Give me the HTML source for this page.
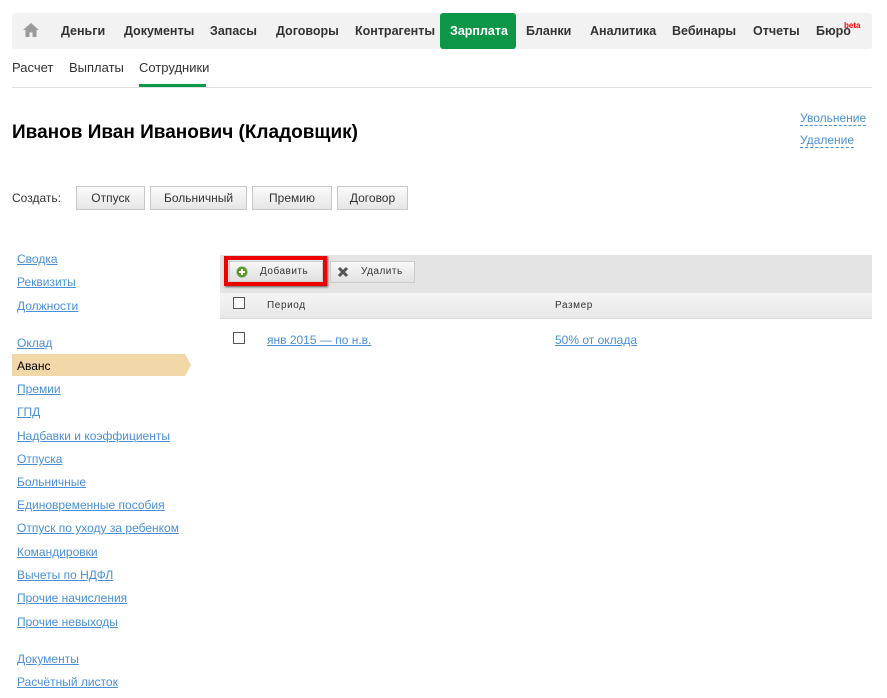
<!DOCTYPE html>
<html><head><meta charset="utf-8"><style>
*{margin:0;padding:0;box-sizing:border-box}
body{width:887px;height:698px;background:#fff;font-family:"Liberation Sans",Arial,sans-serif;position:relative;overflow:hidden;color:#333}
.a{position:absolute}
.nav{left:12px;top:13px;width:860px;height:36px;background:#f2f2f2;border-radius:3px}
.nav span{position:absolute;top:11px;font-size:12.5px;font-weight:bold;color:#333;white-space:nowrap}
.sub{top:60px;font-size:13px;color:#333}
.menu a{position:absolute;left:17px;font-size:12px;color:#4a90d9;text-decoration:underline;white-space:nowrap}
.btn{top:186px;height:24px;border:1px solid #c8c8c8;background:linear-gradient(#fafafa,#e6e6e6);font-size:12px;color:#333;text-align:center;line-height:22px}
.dash{font-size:12px;color:#4a90d9;border-bottom:1px dashed #4a90d9;left:800px}
</style></head><body>
<div class="a nav">
<svg class="a" style="left:10px;top:9px" width="18" height="16" viewBox="0 0 18 16"><path d="M9 1 L1 8 H3.5 V15 H7.5 V10.5 H10.5 V15 H14.5 V8 H17 Z" fill="#9a9a9a"/></svg>
<span style="left:49px">Деньги</span>
<span style="left:112px">Документы</span>
<span style="left:198px">Запасы</span>
<span style="left:264px">Договоры</span>
<span style="left:343px">Контрагенты</span>
<div class="a" style="left:428px;top:0;width:76px;height:36px;background:#0c9748;border-radius:3px"></div>
<span style="left:438px;color:#fff">Зарплата</span>
<span style="left:514px">Бланки</span>
<span style="left:578px">Аналитика</span>
<span style="left:660px">Вебинары</span>
<span style="left:741px">Отчеты</span>
<span style="left:804px">Бюро</span>
<span style="left:832px;top:8px;font-size:8px;color:#f00">beta</span>
</div>
<div class="a sub" style="left:12px">Расчет</div>
<div class="a sub" style="left:69px">Выплаты</div>
<div class="a sub" style="left:139px">Сотрудники</div>
<div class="a" style="left:139px;top:84px;width:67px;height:3px;background:#0c9748"></div>
<div class="a" style="left:12px;top:87px;width:860px;height:1px;background:#e0e0e0"></div>
<div class="a" style="left:12px;top:122px;font-size:19px;font-weight:bold;color:#000">Иванов Иван Иванович (Кладовщик)</div>
<div class="a dash" style="top:111px">Увольнение</div>
<div class="a dash" style="top:133px">Удаление</div>
<div class="a" style="left:12px;top:191px;font-size:12px">Создать:</div>
<div class="a btn" style="left:76px;width:69px">Отпуск</div>
<div class="a btn" style="left:150px;width:97px">Больничный</div>
<div class="a btn" style="left:252px;width:80px">Премию</div>
<div class="a btn" style="left:337px;width:71px">Договор</div>
<div class="menu">
<a style="top:252px">Сводка</a>
<a style="top:275px">Реквизиты</a>
<a style="top:299px">Должности</a>
<a style="top:336px">Оклад</a>
<svg class="a" style="left:12px;top:354px" width="180" height="22"><path d="M0 0H173L179 11L173 22H0Z" fill="#f2d8a8"/></svg>
<div class="a" style="left:17px;top:359px;font-size:12px;color:#000">Аванс</div>
<a style="top:382px">Премии</a>
<a style="top:405px">ГПД</a>
<a style="top:429px">Надбавки и коэффициенты</a>
<a style="top:452px">Отпуска</a>
<a style="top:475px">Больничные</a>
<a style="top:498px">Единовременные пособия</a>
<a style="top:521px">Отпуск по уходу за ребенком</a>
<a style="top:545px">Командировки</a>
<a style="top:568px">Вычеты по НДФЛ</a>
<a style="top:591px">Прочие начисления</a>
<a style="top:615px">Прочие невыходы</a>
<a style="top:652px">Документы</a>
<a style="top:675px">Расчётный листок</a>
</div>
<div class="a" style="left:220px;top:255px;width:652px;height:38px;background:#e4e4e4"></div>
<div class="a" style="left:220px;top:293px;width:652px;height:26px;background:linear-gradient(#f4f4f4,#e8e8e8);border-bottom:1px solid #d8d8d8"></div>
<div class="a" style="left:224px;top:256px;width:103px;height:30px;border:4px solid #e00;box-shadow:1px 1px 2px #555"></div>
<div class="a" style="left:229px;top:261px;width:94px;height:21px;border:1px solid #ccc;background:linear-gradient(#f6f6f6,#e0e0e0);font-size:10px;line-height:19px;padding-left:30px;letter-spacing:.5px">Добавить</div>
<svg class="a" style="left:236px;top:266px" width="12" height="12"><circle cx="6" cy="6" r="5.5" fill="#5a9e2a"/><path d="M6 3V9M3 6H9" stroke="#fff" stroke-width="2"/></svg>
<div class="a" style="left:330px;top:261px;width:85px;height:22px;border:1px solid #ccc;background:linear-gradient(#f8f8f8,#e2e2e2);font-size:10px;line-height:20px;padding-left:30px;letter-spacing:.5px">Удалить</div>
<svg class="a" style="left:337px;top:266px" width="12" height="12"><path d="M2 2L10 10M10 2L2 10" stroke="#555" stroke-width="3"/></svg>
<div class="a" style="left:233px;top:297px;width:12px;height:12px;border:1px solid #555;background:#fff"></div>
<div class="a" style="left:267px;top:300px;font-size:10px;letter-spacing:.6px">Период</div>
<div class="a" style="left:555px;top:300px;font-size:10px;letter-spacing:.6px">Размер</div>
<div class="a" style="left:233px;top:332px;width:12px;height:12px;border:1px solid #555;background:#fff"></div>
<div class="a" style="left:267px;top:333px;font-size:12px;color:#4a90d9;text-decoration:underline">янв 2015 — по н.в.</div>
<div class="a" style="left:555px;top:333px;font-size:12px;color:#4a90d9;text-decoration:underline">50% от оклада</div>
</body></html>
